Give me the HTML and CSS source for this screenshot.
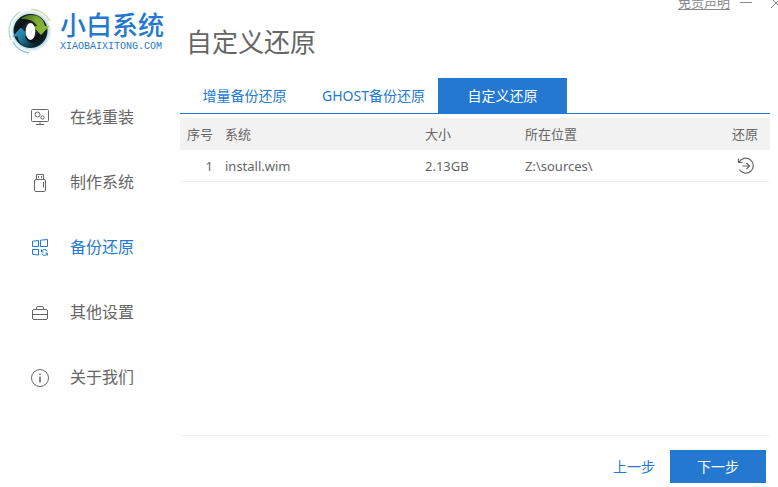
FILE: index.html
```html
<!DOCTYPE html>
<html lang="zh-CN">
<head>
<meta charset="utf-8">
<title>小白系统</title>
<link rel="stylesheet" href="styles.css">
</head>
<body>
<div class="app">
  <aside class="sidebar">
    <div class="brand">
      <svg class="brand-mark" viewBox="0 0 46 46" aria-hidden="true">
        <defs>
          <radialGradient id="disc" cx="50%" cy="45%" r="58%">
            <stop offset="0" stop-color="#3c4a4e"/>
            <stop offset="0.5" stop-color="#0b1113"/>
            <stop offset="0.85" stop-color="#0c2228"/>
            <stop offset="1" stop-color="#17505f"/>
          </radialGradient>
          <radialGradient id="glow">
            <stop offset="0.75" stop-color="#a9cbd2"/>
            <stop offset="1" stop-color="#f6fbfc"/>
          </radialGradient>
          <linearGradient id="green" x1="0" y1="0" x2="1" y2="0.6">
            <stop offset="0" stop-color="#3d611b"/>
            <stop offset="0.5" stop-color="#7fa832"/>
            <stop offset="1" stop-color="#8dba33"/>
          </linearGradient>
          <linearGradient id="blue" x1="0" y1="0" x2="1" y2="0.7">
            <stop offset="0" stop-color="#3ba6cf"/>
            <stop offset="0.45" stop-color="#1f7ba3"/>
            <stop offset="1" stop-color="#08202a"/>
          </linearGradient>
        </defs>
        <circle cx="23" cy="23" r="20.5" fill="url(#glow)"/>
        <path d="M12 4A22 22 0 0 0 3 32" fill="none" stroke="#a9ddd6" stroke-width="1.3"/>
        <path d="M5 34A22 22 0 0 0 21 45" fill="none" stroke="#7fc8e4" stroke-width="1.3"/>
        <path d="M23 1.500A21.500 21.500 0 0 1 42 13" fill="none" stroke="#c9df9e" stroke-width="1.3"/>
        <circle cx="22.500" cy="23" r="17" fill="url(#disc)"/>
        <path d="M13 11C18 5.500 34 4 37 18L41.500 18L33 27L25 18.500L29 18C27 13 20 10.500 13 11Z" fill="url(#green)"/>
        <path d="M32 36C25 42 11 40 9.500 28.500L4.500 28.500L13 19.500L21 28L17 28.500C18 34 25 36.500 32 36Z" fill="url(#blue)"/>
        <ellipse cx="22.500" cy="23.500" rx="4.800" ry="8.500" fill="#fff"/>
      </svg>
      <div class="brand-text">
        <strong class="brand-name">小白系统</strong>
        <span class="brand-url">XIAOBAIXITONG.COM</span>
      </div>
    </div>
    <nav class="menu">
      <a class="menu-item" href="#online">
        <svg class="menu-icon" viewBox="0 0 20 20" aria-hidden="true">
          <rect x="1.500" y="2.500" width="17" height="12" rx="1"/>
          <circle cx="7.500" cy="7.500" r="2.500"/><circle cx="12.500" cy="10.500" r="1.700"/>
          <path d="M10 15v2M6 17.500h8"/>
        </svg>在线重装</a>
      <a class="menu-item" href="#make">
        <svg class="menu-icon" viewBox="0 0 20 20" aria-hidden="true">
          <path d="M6.500 7V2.500h7V7M8.500 4v2M11.500 4v2"/>
          <rect x="4.500" y="7.500" width="11" height="12" rx="1.500"/>
          <path d="M13.500 10v5.500"/>
        </svg>制作系统</a>
      <a class="menu-item menu-item-active" href="#backup">
        <svg class="menu-icon" viewBox="0 0 20 20" aria-hidden="true">
          <path d="M2.500 4.200L8.500 3.500V9.500H2.500ZM10.500 3.200L17.500 2.500V9.500H10.500ZM2.500 12.500H8.500V18L2.500 17.300Z"/>
          <path d="M17.300 14.500A3 3 0 0 0 11.500 15V12.500M11.500 15H13.500M11.700 16.500A3 3 0 0 0 17.400 16.200V18.500M17.400 16.200H15.500"/>
        </svg>备份还原</a>
      <a class="menu-item" href="#settings">
        <svg class="menu-icon" viewBox="0 0 20 20" aria-hidden="true">
          <rect x="2.500" y="7.500" width="15" height="10" rx="1.500"/>
          <path d="M6.500 7.500V6Q6.500 4.500 8 4.500H12Q13.500 4.500 13.500 6V7.500M2.500 12.500H17.500"/>
        </svg>其他设置</a>
      <a class="menu-item" href="#about">
        <svg class="menu-icon" viewBox="0 0 20 20" aria-hidden="true">
          <circle cx="10" cy="11" r="8.500"/>
          <path d="M10 9.500V15.500M10 6.500V8" stroke-width="1.600"/>
        </svg>关于我们</a>
    </nav>
  </aside>

  <main class="content">
    <div class="window-bar">
      <a class="disclaimer" href="#disclaimer">免责声明</a>
      <button class="window-button" type="button" aria-label="最小化">
        <svg viewBox="0 0 12 12" aria-hidden="true"><path d="M0 6.500H12"/></svg>
      </button>
      <button class="window-button" type="button" aria-label="关闭">
        <svg viewBox="0 0 12 12" aria-hidden="true"><path d="M1 2L11 12M11 2L1 12"/></svg>
      </button>
    </div>
    <h1 class="page-title">自定义还原</h1>
    <div class="tabs" role="tablist">
      <button class="tab" type="button" role="tab">增量备份还原</button>
      <button class="tab" type="button" role="tab">GHOST备份还原</button>
      <button class="tab tab-active" type="button" role="tab" aria-selected="true">自定义还原</button>
    </div>
    <div class="list">
      <table class="images">
        <thead>
          <tr><th class="col-index">序号</th><th class="col-name">系统</th><th class="col-size">大小</th><th class="col-path">所在位置</th><th class="col-action">还原</th></tr>
        </thead>
        <tbody>
          <tr>
            <td class="col-index">1</td><td>install.wim</td><td>2.13GB</td><td>Z:\sources\</td>
            <td class="col-action">
              <button class="restore" type="button" aria-label="还原">
                <svg viewBox="0 0 18 18" aria-hidden="true"><path stroke-width="1.200" d="M2 5.500A7.500 7.500 0 1 1 2.300 12.500M1.500 1.500V5.500H5.500M5.500 9H12.500M9.500 6L12.500 9L9.500 12"/></svg>
              </button>
            </td>
          </tr>
        </tbody>
      </table>
    </div>
    <footer class="actions">
      <button class="previous" type="button">上一步</button>
      <button class="next" type="button">下一步</button>
    </footer>
  </main>
</div>
</body>
</html>
```
FILE: styles.css
```css
* {
  box-sizing: border-box;
}

body {
  margin: 0;
  background: #fff;
  color: #666;
  font-family: "Noto Sans", "Noto Sans CJK SC", sans-serif;
  font-size: 13px;
  line-height: 20px;
}

button {
  padding: 0;
  border: 0;
  background: none;
  color: inherit;
  font: inherit;
}

svg {
  display: block;
  fill: none;
  stroke: currentColor;
}

.app {
  display: flex;
  min-height: 100vh;
  overflow: hidden;
}

.sidebar {
  flex: none;
  width: 180px;
}

.brand {
  display: flex;
  gap: 6px;
  height: 84px;
  padding: 8px 0 0 8px;
  color: #2478cf;
}

.brand-mark {
  width: 46px;
  height: 46px;
  stroke: none;
}

.brand-text {
  display: flex;
  flex-direction: column;
  white-space: nowrap;
}

.brand-name {
  font-size: 26px;
  font-weight: 500;
  line-height: 34px;
}

.brand-url {
  font-family: "Liberation Mono", monospace;
  font-size: 10px;
  line-height: 10px;
}

.menu-item {
  display: flex;
  align-items: center;
  gap: 20px;
  height: 65px;
  padding-left: 30px;
  color: #666;
  font-size: 16px;
  text-decoration: none;
}

.menu-icon {
  width: 20px;
  height: 20px;
}

.menu-item-active {
  color: #2478cf;
}

.content {
  display: flex;
  flex: 1;
  flex-direction: column;
  min-width: 0;
  padding-right: 8px;
}

.window-bar {
  display: flex;
  justify-content: flex-end;
  align-items: center;
  gap: 10px;
  height: 20px;
  margin: -8px -12px 0 0;
  color: #888;
}

.disclaimer {
  color: #888;
  text-underline-offset: 2px;
}

.window-button {
  width: 12px;
  height: 12px;
}

.window-button + .window-button {
  margin-left: 8px;
}

.page-title {
  margin: 10px 0 16px;
  padding-left: 6px;
  font-size: 26px;
  font-weight: 400;
  line-height: 40px;
}

.tabs {
  display: flex;
  border-bottom: 1px solid #2478cf;
}

.tab {
  width: 129px;
  height: 35px;
  color: #2478cf;
  font-size: 14px;
  white-space: nowrap;
}

.tab-active {
  background: #2478cf;
  color: #fff;
}

.list {
  flex: 1;
  padding-top: 4px;
}

.images {
  width: 100%;
  border-collapse: separate;
  border-spacing: 0;
  table-layout: fixed;
}

.images th,
.images td {
  height: 32px;
  padding: 0;
  font-weight: 400;
  text-align: left;
}

.images th {
  background: #f2f2f2;
}

.images td {
  border-bottom: 1px solid #f0f0f0;
}

.images .col-index {
  width: 45px;
  padding-right: 12px;
  text-align: right;
}

.col-name {
  width: 200px;
}

.col-size {
  width: 100px;
}

.images .col-action {
  padding-right: 12px;
  text-align: right;
}

.restore {
  display: block;
  width: 18px;
  height: 18px;
  margin: 0 3px 0 auto;
}

.actions {
  display: flex;
  justify-content: flex-end;
  gap: 15px;
  padding: 14px 4px 4px;
  border-top: 1px solid #f0f0f0;
  font-size: 14px;
}

.previous {
  color: #2478cf;
}

.next {
  width: 96px;
  height: 33px;
  background: #2478cf;
  color: #fff;
}
```
